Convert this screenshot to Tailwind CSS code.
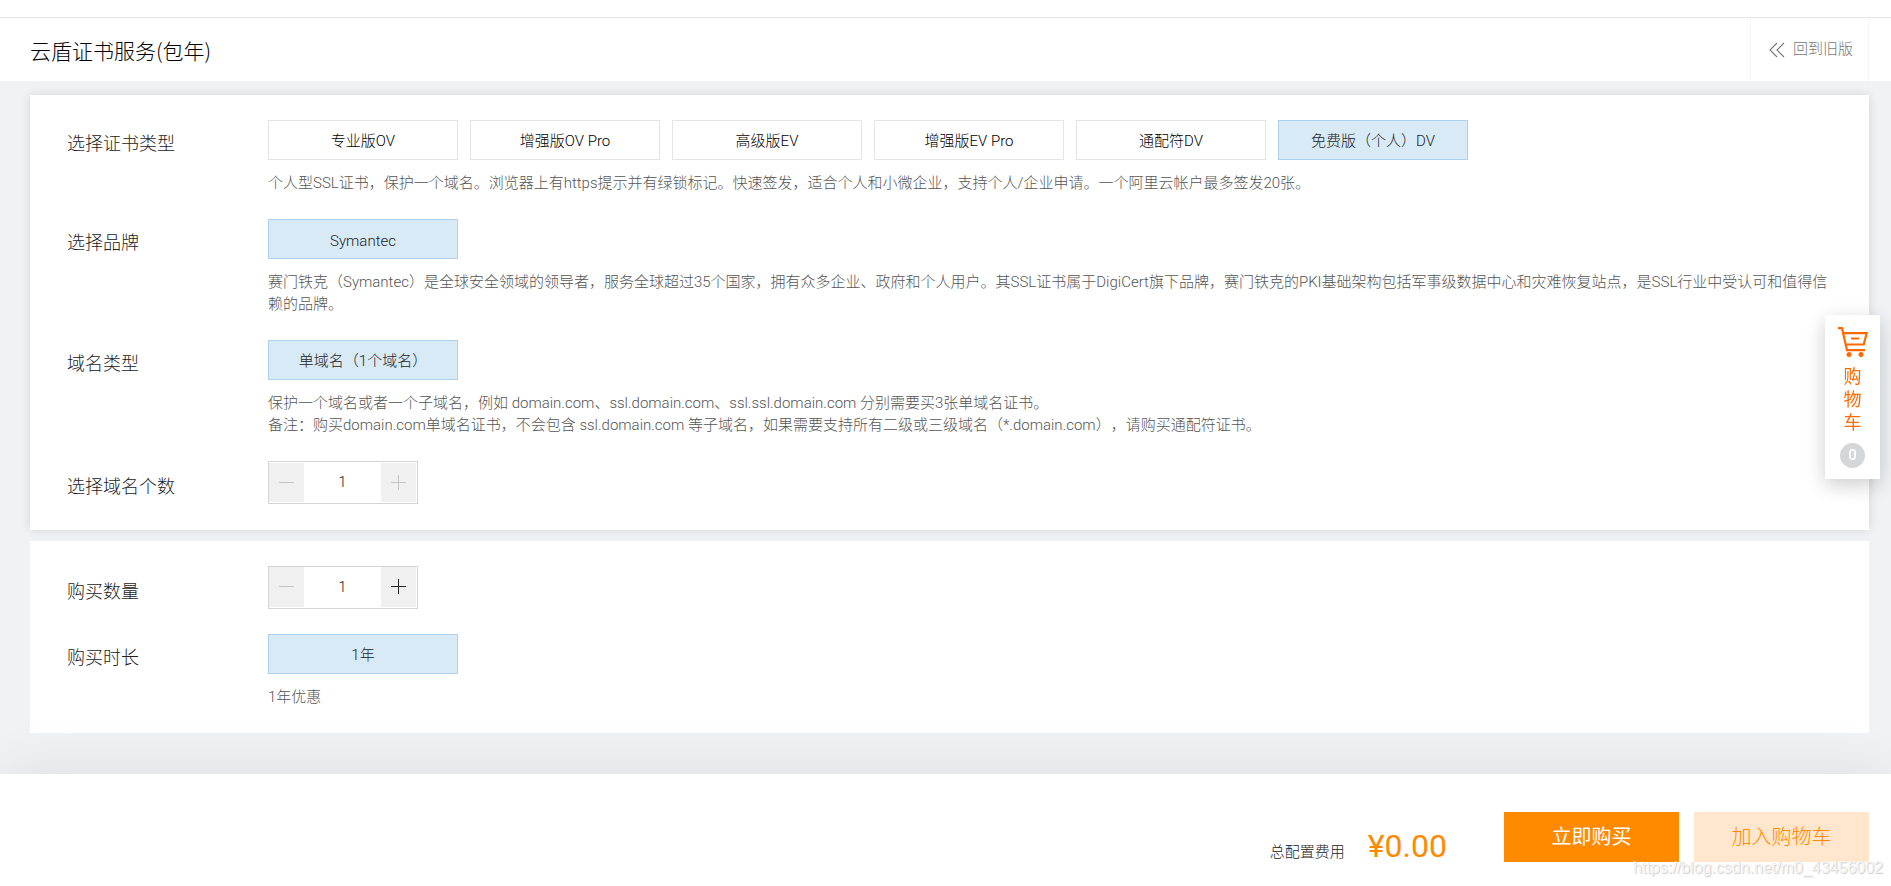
<!DOCTYPE html>
<html lang="zh-CN">
<head>
<meta charset="utf-8">
<title>云盾证书服务(包年)</title>
<script src="https://cdn.jsdelivr.net/npm/@tailwindcss/browser@4"></script>
</head>
<body class="flex min-h-screen flex-col bg-[#f1f2f5] font-['Roboto','Noto_Sans_CJK_SC',sans-serif] text-[15px] font-light text-[#222] [text-spacing-trim:space-all]">
<header class="bg-white pt-[17px]">
  <div class="flex h-16 items-stretch justify-between border-t border-[#e4e5e7] pl-[30px] pr-[22px]">
    <h1 class="self-center font-['Noto_Sans_CJK_SC',sans-serif] text-[21px] leading-8 font-light text-black">云盾证书服务(包年)</h1>
    <a href="#" class="flex items-center gap-2 border-x border-[#f5f5f6] pl-[18px] pr-[15px] text-[#777]">
      <svg class="size-4" viewBox="0 0 16 16" fill="none" stroke="currentColor" stroke-width="1.1"><path d="M8 1 1 8l7 7M15 1 8 8l7 7"/></svg>
      回到旧版
    </a>
  </div>
</header>

<main class="flex flex-col gap-[11px] pt-3.5 pl-[30px] pr-[22px] pb-[41px]">
  <section class="flex flex-col gap-[25px] bg-white px-[37px] pt-[25px] pb-[26px] shadow-[0_0_10px_rgba(0,0,0,0.12)]">
    <div class="flex">
      <h2 class="mt-[13px] w-[201px] shrink-0 text-[18px] leading-[22px] font-light">选择证书类型</h2>
      <div class="flex-1">
        <div class="flex flex-wrap gap-3 text-black">
          <button class="h-10 w-[190px] border border-[#e3e4e6] bg-white pt-0.5">专业版OV</button>
          <button class="h-10 w-[190px] border border-[#e3e4e6] bg-white pt-0.5">增强版OV Pro</button>
          <button class="h-10 w-[190px] border border-[#e3e4e6] bg-white pt-0.5">高级版EV</button>
          <button class="h-10 w-[190px] border border-[#e3e4e6] bg-white pt-0.5">增强版EV Pro</button>
          <button class="h-10 w-[190px] border border-[#e3e4e6] bg-white pt-0.5">通配符DV</button>
          <button class="h-10 w-[190px] border border-[#add2ef] bg-[#d8eaf6] pt-0.5 text-[#222]">免费版（个人）DV</button>
        </div>
        <p class="mt-3 leading-[22px] text-[#555]">个人型SSL证书，保护一个域名。浏览器上有https提示并有绿锁标记。快速签发，适合个人和小微企业，支持个人/企业申请。一个阿里云帐户最多签发20张。</p>
      </div>
    </div>
    <div class="flex">
      <h2 class="mt-[13px] w-[201px] shrink-0 text-[18px] leading-[22px] font-light">选择品牌</h2>
      <div class="flex-1">
        <button class="block h-10 w-[190px] border border-[#add2ef] bg-[#d8eaf6] pt-1">Symantec</button>
        <p class="mt-3 leading-[22px] text-[#555]">赛门铁克（Symantec）是全球安全领域的领导者，服务全球超过35个国家，拥有众多企业、政府和个人用户。其SSL证书属于DigiCert旗下品牌，赛门铁克的PKI基础架构包括军事级数据中心和灾难恢复站点，是SSL行业中受认可和值得信赖的品牌。</p>
      </div>
    </div>
    <div class="flex">
      <h2 class="mt-[13px] w-[201px] shrink-0 text-[18px] leading-[22px] font-light">域名类型</h2>
      <div class="flex-1">
        <button class="block h-10 w-[190px] border border-[#add2ef] bg-[#d8eaf6] pt-0.5">单域名（1个域名）</button>
        <p class="mt-3 leading-[22px] text-[#555]">保护一个域名或者一个子域名，例如 domain.com、ssl.domain.com、ssl.ssl.domain.com 分别需要买3张单域名证书。<br>备注：购买domain.com单域名证书，不会包含 ssl.domain.com 等子域名，如果需要支持所有二级或三级域名（*.domain.com），请购买通配符证书。</p>
      </div>
    </div>
    <div class="flex">
      <label for="domains" class="mt-[15px] w-[201px] shrink-0 text-[18px] leading-[22px]">选择域名个数</label>
      <div class="flex h-[43px] w-[150px] border border-[#d4d4d5] py-px pr-px">
        <button disabled aria-label="减少域名个数" class="flex w-[35px] items-center justify-center bg-[#f0f0f0] text-[#c4c4c4]"><svg class="size-4" viewBox="0 0 16 16" stroke="currentColor"><path d="M0 7.500h15"/></svg></button>
        <input id="domains" type="text" value="1" class="min-w-0 flex-1 bg-white text-center">
        <button disabled aria-label="增加域名个数" class="flex w-[35px] items-center justify-center bg-[#f0f0f0] text-[#c4c4c4]"><svg class="size-4" viewBox="0 0 16 16" stroke="currentColor"><path d="M0 7.500h15M7.500 0v15"/></svg></button>
      </div>
    </div>
  </section>

  <section class="flex flex-col gap-[25px] bg-white px-[37px] py-[25px]">
    <div class="flex">
      <label for="amount" class="mt-[15px] w-[201px] shrink-0 text-[18px] leading-[22px]">购买数量</label>
      <div class="flex h-[43px] w-[150px] border border-[#d4d4d5] pr-px pb-px">
        <button disabled aria-label="减少数量" class="flex w-[35px] items-center justify-center bg-[#f0f0f0] text-[#c4c4c4]"><svg class="size-4" viewBox="0 0 16 16" stroke="currentColor"><path d="M0 7.500h15"/></svg></button>
        <input id="amount" type="text" value="1" class="min-w-0 flex-1 bg-white text-center">
        <button aria-label="增加数量" class="flex w-[35px] items-center justify-center bg-[#f0f0f0] text-[#222]"><svg class="size-4" viewBox="0 0 16 16" stroke="currentColor"><path d="M0 7.500h15M7.500 0v15"/></svg></button>
      </div>
    </div>
    <div class="flex">
      <h2 class="mt-[13px] w-[201px] shrink-0 text-[18px] leading-[22px] font-light">购买时长</h2>
      <div class="flex-1">
        <button class="block h-10 w-[190px] border border-[#add2ef] bg-[#d8eaf6] pt-0.5">1年</button>
        <p class="mt-3 leading-[22px] text-[#555]">1年优惠</p>
      </div>
    </div>
  </section>
</main>

<footer class="relative flex flex-1 items-start justify-end bg-white pt-[38px] pr-[22px] shadow-[0_0_60px_rgba(0,0,0,0.09)]">
  <div class="mt-[14px] mr-[57px] flex items-baseline gap-[23px]">
    <span>总配置费用</span>
    <span class="text-[32px] leading-10 font-normal text-[#ff8a00]">¥0.00</span>
  </div>
  <div class="flex gap-[15px] text-[20px]">
    <button class="h-[50px] w-[175px] bg-[#ff8a00] font-normal text-white">立即购买</button>
    <button class="h-[50px] w-[175px] bg-[#ffe6cc] text-[#ff8a00]">加入购物车</button>
  </div>
  <span class="absolute right-2 bottom-1.5 font-['Liberation_Sans',sans-serif] text-[16px] leading-6 font-normal text-[#f4f4f4] [text-shadow:1px_1px_1px_#ccc]">https://blog.csdn.net/m0_43456002</span>
</footer>

<aside class="fixed top-[315px] right-[11px] flex w-[55px] flex-col items-center bg-white pt-3 pb-[11px] shadow-[0_6px_20px_rgba(0,0,0,0.2)]">
  <a href="#" class="flex flex-col items-center text-[18px] leading-[23px] font-normal text-[#ff6a00]">
    <svg class="mb-2 h-[30px] w-[30px]" viewBox="0 0 30 30" fill="none" stroke="currentColor" stroke-width="2.200"><path d="M0 1.200h4l5 22h18M5 6.200h23.700l-3 11.300H8M13 11.500h8"/><circle cx="11" cy="27.500" r="2.500" fill="currentColor" stroke="none"/><circle cx="23" cy="27.500" r="2.500" fill="currentColor" stroke="none"/></svg>
    <span>购</span><span>物</span><span>车</span>
  </a>
  <span class="mt-[9px] flex size-[25px] items-center justify-center rounded-full bg-[#d5d6d8] font-medium text-white">0</span>
</aside>
</body>
</html>
